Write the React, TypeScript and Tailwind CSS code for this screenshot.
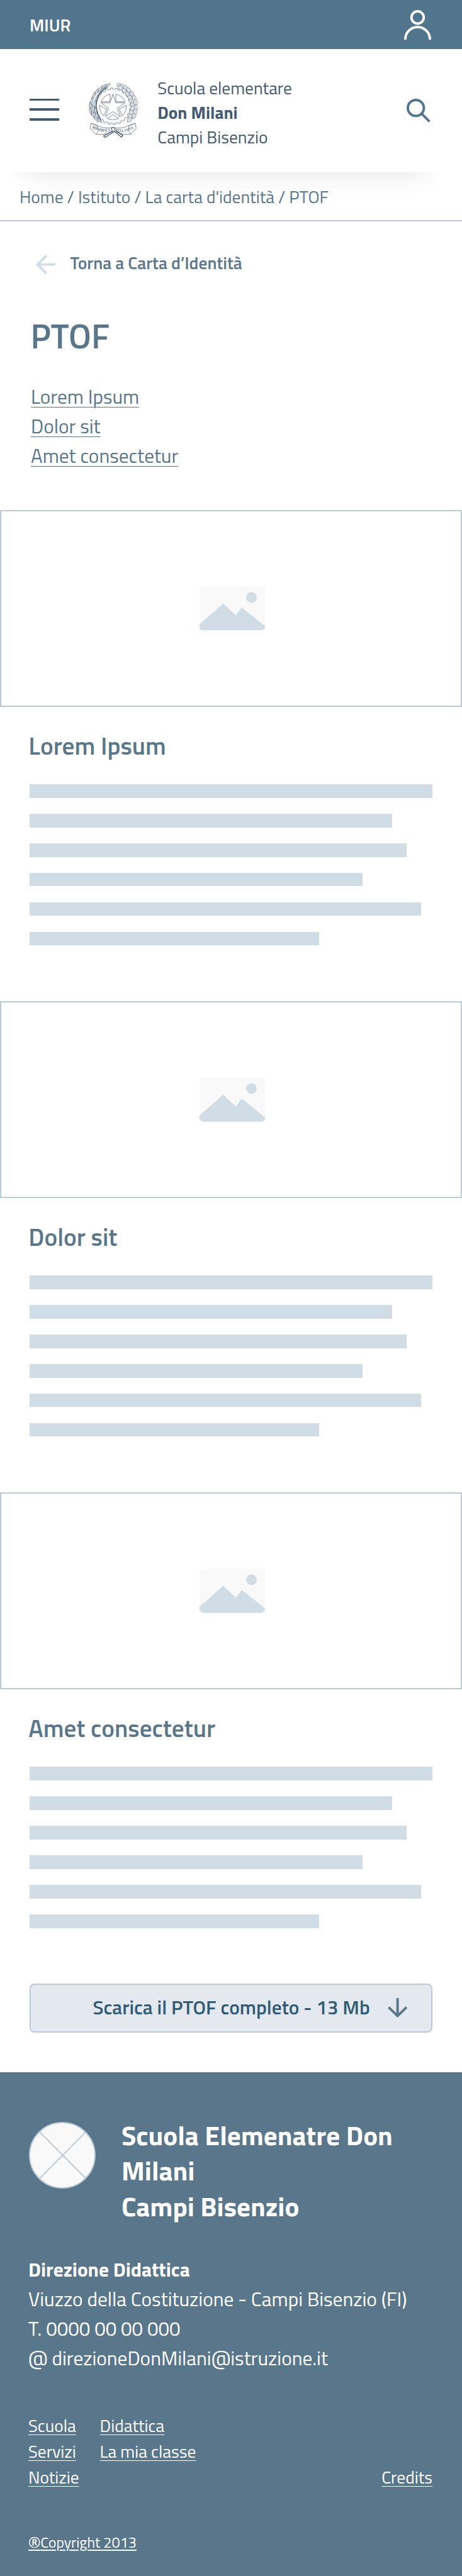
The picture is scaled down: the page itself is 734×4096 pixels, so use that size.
import React from "react";

const INK = "#445a73";

function UserIcon() {
  return (
    <svg className="h-[47px] w-[43px]" viewBox="0 0 44 48" fill="none" stroke="#fff" strokeWidth="4">
      <circle cx="22" cy="12" r="10" />
      <path d="M2 48V47.5a20 20 0 0 1 40 0V48" />
    </svg>
  );
}

function SearchIcon() {
  return (
    <svg className="h-[37.2px] w-[37.2px]" viewBox="0 0 38 38" fill="none" stroke="#51758d" strokeWidth="4">
      <circle cx="15" cy="15" r="13" />
      <path d="M24.5 24.5L36 36" strokeLinecap="round" />
    </svg>
  );
}

const gearPath = (() => {
  const teeth = 22;
  const points: string[] = [];
  for (let i = 0; i < teeth; i++) {
    const corners: [number, number][] = [
      [0, 27.5],
      [0.45, 27.5],
      [0.52, 29.8],
      [0.93, 29.8],
    ];
    for (const [offset, radius] of corners) {
      const a = ((i + offset) / teeth) * Math.PI * 2;
      points.push(`${(39.3 + radius * Math.sin(a)).toFixed(2)} ${(38.8 - radius * Math.cos(a)).toFixed(2)}`);
    }
  }
  return `M${points.join("L")}Z`;
})();

const starPath = (() => {
  const points: string[] = [];
  for (let i = 0; i < 10; i++) {
    const radius = i % 2 === 0 ? 20.5 : 7.9;
    const a = (i / 10) * Math.PI * 2;
    points.push(`${(39.3 + radius * Math.sin(a)).toFixed(2)} ${(39.5 - radius * Math.cos(a)).toFixed(2)}`);
  }
  return `M${points.join("L")}Z`;
})();

const laurel = [
  [30, 5, 62, 6], [24, 7, 50, 6], [27, 9, 58, 5], [18, 11, 38, 7], [22, 13, 42, 6], [12, 16, 32, 7],
  [17, 20, 28, 7], [8, 22, 18, 7], [13, 27, 15, 7], [5, 30, 6, 7], [10, 35, 4, 7], [2.6, 38, -4, 7],
  [7, 43, -8, 7], [3, 47, -14, 7], [11, 47, -2, 7], [7, 53, -26, 7], [13, 54, -20, 6], [12, 60, -40, 6], [18, 61, -34, 5],
];

const oak = [
  [50, 5, -62], [55, 7, -50], [52, 9, -55], [60, 9, -42], [58, 14, -40], [65, 13, -30], [63, 19, -35],
  [70, 19, -20], [67, 25, -28], [74, 26, -10], [69, 31, -12], [76, 33, 0], [71, 37, -4], [77, 41, 8],
  [71, 43, 12], [75, 48, 20], [69, 50, 16], [73, 55, 32], [67, 56, 28], [66, 61, 42],
];

function Emblem() {
  return (
    <svg className="h-[88px] w-[78.3px] shrink-0" viewBox="0 0 80 90" fill="none" stroke={INK} strokeWidth="0.7" strokeLinejoin="round">
      <path d={gearPath} />
      <path d={starPath} fill="#fff" />
      <path d="M34.6 19.2A21 21 0 0 0 19.8 31.5L34.6 31.5Z" />
      <path d="M44 19.2A21 21 0 0 1 58.8 31.5L44 31.5Z" />
      <path d="M17.7 37A21 21 0 0 0 24.5 54.4L29 43.6Z" />
      <path d="M60.9 37A21 21 0 0 1 54.1 54.4L49.6 43.6Z" />
      <path d="M30.3 58.6A21 21 0 0 0 48.3 58.6L39.3 52.2Z" />
      {laurel.map(([x, y, angle, length], i) => (
        <g key={i} transform={`translate(${x} ${y}) rotate(${angle})`}>
          <path d={`M0 ${-length}Q3.4 0 0 ${length}Q-3.4 0 0 ${-length}Z`} fill="#fff" strokeWidth="0.6" />
          <path d={`M0 ${-length + 2}V${length}`} strokeWidth="0.4" />
        </g>
      ))}
      <path d="M29 8C12 18 6 38 20 62" strokeWidth="1.3" />
      {oak.map(([x, y, angle], i) => (
        <g key={i} transform={`translate(${x} ${y}) rotate(${angle})`}>
          <path d="M0-4.6C2-5 2.4-3.4 1.6-2.6C3.4-2.4 3.6-.6 2 0C3.4.8 3 2.8 1.4 2.8L0 4.8L-1.4 2.8C-3 2.8-3.4.8-2 0C-3.6-.6-3.4-2.4-1.6-2.6C-2.4-3.4-2-5 0-4.6Z" fill="#fff" strokeWidth="0.6" />
          <path d="M0-3V4.6" strokeWidth="0.4" />
        </g>
      ))}
      <path d="M3.5 66.5L14 70.5Q26 76 39.5 73.5Q53 76 64 70.5L75.5 66.5L77 75L68.5 84.5Q54 85.5 41 79.5Q27 85.5 12 84.5L2 75Z" fill="#fff" />
      <path d="M3.5 66.5Q9 68 13.5 70.5L15.5 78L12 84.5M75.5 66.5Q70 68 65.5 70.5L64 78L68.5 84.5" />
      <path id="ribbon-left" d="M5 74Q20 83 37 79" stroke="none" />
      <path id="ribbon-right" d="M43.5 79.5Q60 83.5 75.5 73.5" stroke="none" />
      <text fill={INK} stroke="none" fontSize="6.6" className="font-['Liberation_Serif']">
        <textPath href="#ribbon-left" textLength="32">REPVBBLICA</textPath>
      </text>
      <text fill={INK} stroke="none" fontSize="6.6" className="font-['Liberation_Serif']">
        <textPath href="#ribbon-right" textLength="31">ITALIANA</textPath>
      </text>
      <path d="M37 74Q40 72 43 75L42 80L38 79.5Z" fill="#fff" strokeWidth="1.1" />
      <path d="M38 79.5L24 87L26.5 89.5L41 80M42 80L53 89L55.5 86.5L44 78" strokeWidth="1.4" />
    </svg>
  );
}

function Placeholder() {
  return (
    <div className="flex h-[313.2px] items-center justify-center border-2 border-[#b9cada] pl-[4.5px]">
      <svg className="h-[70.5px] w-[104.2px]" viewBox="0 0 106.5 72">
        <rect x="0.5" width="106" height="72" rx="6" fill="#f9f9f9" />
        <path d="M0 62L38.5 28.2L59 47.6L68.7 34.6L106.5 65V66a6 6 0 0 1-6 6H6a6 6 0 0 1-6-6Z" fill="#d0dde6" />
        <circle cx="84.3" cy="18.4" r="8.6" fill="#d0dde6" />
      </svg>
    </div>
  );
}

function Section({ title }: { title: string }) {
  return (
    <section className="pb-[88.3px]">
      <Placeholder />
      <h2 className="mt-[33px] pl-[45.3px] text-[39.15px] leading-[58.7px] font-semibold">{title}</h2>
      <div className="mt-[31.6px] ml-[47px] flex flex-col gap-[25.45px]">
        <div className="h-[21.53px] w-[640px] bg-[#d0dde6]" />
        <div className="h-[21.53px] w-[575.5px] bg-[#d0dde6]" />
        <div className="h-[21.53px] w-[599px] bg-[#d0dde6]" />
        <div className="h-[21.53px] w-[529.3px] bg-[#d0dde6]" />
        <div className="h-[21.53px] w-[621.5px] bg-[#d0dde6]" />
        <div className="h-[21.53px] w-[460.3px] bg-[#d0dde6]" />
      </div>
    </section>
  );
}

function FooterLink({ children }: { children: string }) {
  return (
    <a className="underline decoration-1 underline-offset-[4px]" href="#">
      {children}
    </a>
  );
}

export default function App() {
  return (
    <div className="flex h-[4096px] w-[734px] flex-col overflow-hidden bg-white font-['Titillium_Web','Roboto',sans-serif] text-[#5a768a]">
      <div className="flex h-[78.3px] shrink-0 items-center justify-between bg-[#51758d] pr-[49px] pl-[47px] text-white">
        <span className="pt-px text-[27.4px] leading-10 font-semibold">MIUR</span>
        <UserIcon />
      </div>

      <header className="flex h-[195.7px] shrink-0 items-start pr-[50.5px] pl-[47px] text-[#445a73]">
        <div className="mt-[78.3px] flex flex-col gap-[11.7px]">
          <div className="h-[3.9px] w-[47px] bg-[#445a73]" />
          <div className="h-[3.9px] w-[47px] bg-[#445a73]" />
          <div className="h-[3.9px] w-[47px] bg-[#445a73]" />
        </div>
        <div className="mt-[52.8px] ml-[47px]">
          <Emblem />
        </div>
        <div className="mt-[42.5px] ml-[31px] text-[27.4px] leading-[39.15px]">
          <div>Scuola elementare</div>
          <div className="font-bold">Don Milani</div>
          <div>Campi Bisenzio</div>
        </div>
        <div className="mt-[78.3px] ml-auto">
          <SearchIcon />
        </div>
      </header>

      <nav className="relative flex h-[78.3px] shrink-0 items-center border-b-2 border-[#b9cada] pt-[2px] pl-[31px]">
        <div className="absolute top-0 left-0 h-[60px] w-[702px] overflow-hidden">
          <div className="absolute -top-[60px] left-[40px] h-[60px] w-[636px] shadow-[0_0_40px_rgba(0,0,0,0.12)]" />
        </div>
        <span className="relative text-[27.4px] leading-10">Home / Istituto / La carta d'identità / PTOF</span>
      </nav>

      <main className="shrink-0">
        <div className="flex h-[92px] items-center pt-[45px] pl-[56.8px]">
          <svg className="h-[31.3px] w-[31.3px]" viewBox="0 0 32 32" fill="none" stroke="#d0dde6" strokeWidth="4">
            <path d="M32 16H3M17 1.5L2.8 16L17 30.5" />
          </svg>
          <span className="ml-[23.4px] pb-[4.6px] text-[27.5px] leading-10 font-semibold">Torna a Carta d’Identità</span>
        </div>
        <h1 className="mt-[59px] pl-[48.4px] text-[54.8px] leading-[62.6px] font-semibold">PTOF</h1>
        <ul className="mt-[41.1px] mb-[62.7px] pl-[49px] text-[31.3px] leading-[46.98px]">
          <li className="underline decoration-1 underline-offset-[5px]">Lorem Ipsum</li>
          <li className="underline decoration-1 underline-offset-[5px]">Dolor sit</li>
          <li className="underline decoration-1 underline-offset-[5px]">Amet consectetur</li>
        </ul>
        <Section title="Lorem Ipsum" />
        <Section title="Dolor sit" />
        <Section title="Amet consectetur" />
        <button className="mb-[62.7px] ml-[47px] flex h-[78.3px] w-[640px] items-center justify-end rounded-[8px] border-2 border-[#b9cada] bg-[#e4e9f0] pr-[37.5px]">
          <span className="pb-[2px] text-[31.3px] leading-[46px] font-semibold text-[#345b76]">Scarica il PTOF completo - 13 Mb</span>
          <svg className="ml-[28.5px] h-[31.3px] w-[31.3px]" viewBox="0 0 32 32" fill="none" stroke="#5a768a" strokeWidth="4">
            <path d="M16 0V29M1.5 15L16 29.2L30.5 15" />
          </svg>
        </button>
      </main>

      <footer className="grow bg-[#5a768a] pt-[71.8px] pr-[47px] pl-[45px] text-white">
        <div className="flex items-start">
          <svg className="mt-[7.4px] ml-px h-[105.9px] w-[105.9px] shrink-0" viewBox="0 0 108 108" fill="none" stroke="#b9cada" strokeWidth="2">
            <circle cx="54" cy="54" r="53" fill="#f9f9f9" />
            <path d="M17.5 16.5L92 91.5M92 16.5L17.5 91.5" />
          </svg>
          <div className="ml-[41px] text-[43.06px] leading-[56.8px] font-bold">
            Scuola Elemenatre Don
            <br />
            Milani
            <br />
            Campi Bisenzio
          </div>
        </div>
        <div className="mt-[48px] text-[31.3px] leading-[46.98px] whitespace-nowrap">
          <div className="font-bold">Direzione Didattica</div>
          <div>Viuzzo della Costituzione - Campi Bisenzio (FI)</div>
          <div>T. 0000 00 00 000</div>
          <div>@ direzioneDonMilani@istruzione.it</div>
        </div>
        <div className="mt-[64.1px] flex text-[27.4px] leading-[41.1px] whitespace-nowrap">
          <div className="flex w-[113.5px] flex-col">
            <FooterLink>Scuola</FooterLink>
            <FooterLink>Servizi</FooterLink>
            <FooterLink>Notizie</FooterLink>
          </div>
          <div className="flex flex-col">
            <FooterLink>Didattica</FooterLink>
            <FooterLink>La mia classe</FooterLink>
          </div>
          <div className="ml-auto flex flex-col justify-end">
            <FooterLink>Credits</FooterLink>
          </div>
        </div>
        <div className="mt-[64.6px] h-[35.2px] text-[23.5px] leading-[35.2px] underline decoration-2 underline-offset-[3px]">
          <span className="font-['Noto_Sans']">®</span>Copyright 2013
        </div>
      </footer>
    </div>
  );
}
